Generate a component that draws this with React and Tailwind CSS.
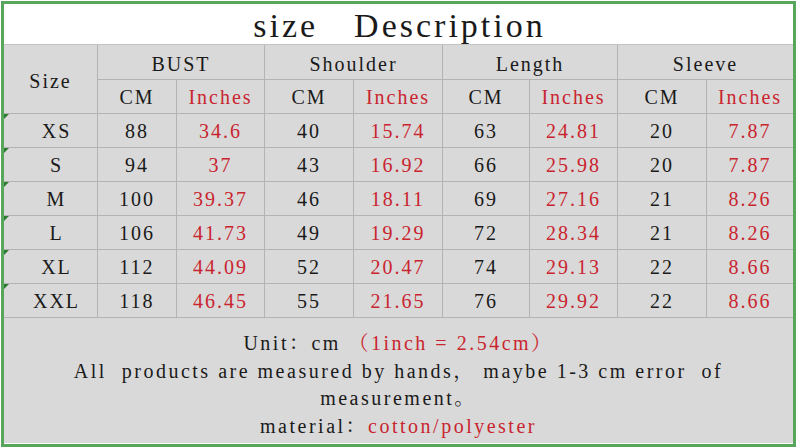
import React from "react";

const RED = "text-[#c9252f]";

const rows = [
  ["XS", "88", "34.6", "40", "15.74", "63", "24.81", "20", "7.87"],
  ["S", "94", "37", "43", "16.92", "66", "25.98", "20", "7.87"],
  ["M", "100", "39.37", "46", "18.11", "69", "27.16", "21", "8.26"],
  ["L", "106", "41.73", "49", "19.29", "72", "28.34", "21", "8.26"],
  ["XL", "112", "44.09", "52", "20.47", "74", "29.13", "22", "8.66"],
  ["XXL", "118", "46.45", "55", "21.65", "76", "29.92", "22", "8.66"],
];

function Cell({ children, className = "", last = false }) {
  return (
    <div
      className={`flex items-center justify-center border-b border-[#b3b3b3] ${
        last ? "" : "border-r"
      } ${className}`}
    >
      {children}
    </div>
  );
}

export default function App() {
  return (
    <div className="w-[797px] h-[448px] bg-white p-px font-['Liberation_Serif','Noto_Serif_CJK_SC','Noto_Sans_CJK_SC',serif] text-[#1a1a1a]">
      <div className="h-full border-[3px] border-[#58a55c] flex flex-col">
        <div className="h-[40px] bg-white flex items-center justify-center gap-[36px] text-[34px] leading-none tracking-[3px] pt-[4px] pl-[2px]">
          <span>size</span>
          <span>Description</span>
        </div>
        <div className="grid grid-cols-[94px_79px_88px_89px_89px_87px_88px_89px_1fr] grid-rows-[35px_34px_repeat(6,34px)] bg-[#d9d9d9] text-[20px] tracking-[2px] border-t border-[#c4c4c4]">
          <Cell className="row-span-2 pt-[4px]">Size</Cell>
          <Cell className="col-span-2 pt-[4px]">BUST</Cell>
          <Cell className="col-span-2 pt-[4px]">Shoulder</Cell>
          <Cell className="col-span-2 pt-[4px]">Length</Cell>
          <Cell className="col-span-2 pt-[4px]" last>
            Sleeve
          </Cell>
          {[0, 1, 2, 3].map((i) => (
            <React.Fragment key={i}>
              <Cell>CM</Cell>
              <Cell className={RED} last={i === 3}>
                Inches
              </Cell>
            </React.Fragment>
          ))}
          {rows.map((r) => (
            <React.Fragment key={r[0]}>
              {r.map((v, j) => (
                <Cell
                  key={j}
                  last={j === 8}
                  className={`${j > 0 && j % 2 === 0 ? RED : ""} ${
                    j === 0 ? "relative pl-3" : ""
                  }`}
                >
                  {j === 0 && (
                    <span className="absolute left-0 top-0 w-0 h-0 border-t-[5px] border-t-[#2f7d32] border-r-[5px] border-r-transparent" />
                  )}
                  {v}
                </Cell>
              ))}
            </React.Fragment>
          ))}
        </div>
        <div className="flex-1 bg-[#d9d9d9] border-b border-white text-center text-[20px] tracking-[2.5px] leading-[27.5px] pt-[12px] whitespace-pre">
          <div>
            {"Unit：cm "}
            <span className={RED}>{"（1inch = 2.54cm）"}</span>
          </div>
          <div>{"All  products are measured by hands， maybe 1-3 cm error  of"}</div>
          <div>{"measurement。"}</div>
          <div>
            {"material："}
            <span className={RED}>cotton/polyester</span>
          </div>
        </div>
      </div>
    </div>
  );
}
